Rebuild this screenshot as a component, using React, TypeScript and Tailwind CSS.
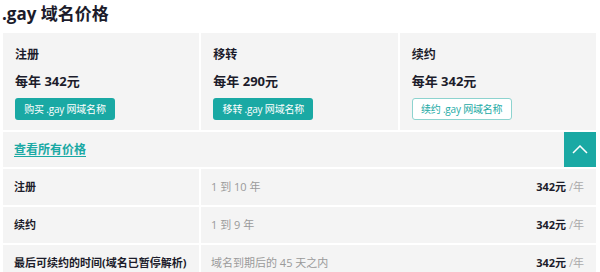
import React from 'react';

const FONT = { fontFamily: '"Open Sans", "Noto Sans CJK SC", sans-serif' };

type Plan = { label: string; price: string; action: string; outline?: boolean };

const plans: Plan[] = [
  { label: '注册', price: '每年 342元', action: '购买 .gay 网域名称' },
  { label: '移转', price: '每年 290元', action: '移转 .gay 网域名称' },
  { label: '续约', price: '每年 342元', action: '续约 .gay 网域名称', outline: true },
];

const rows = [
  { label: '注册', value: '1 到 10 年' },
  { label: '续约', value: '1 到 9 年' },
  { label: '最后可续约的时间(域名已暂停解析)', value: '域名到期后的 45 天之内' },
];

function PlanCard({ plan }: { plan: Plan }) {
  return (
    <div className="h-[97px] bg-[#f4f4f4] pl-[12px] pt-[14px]">
      <div className="text-[12px] font-bold leading-[16px] text-[#1c1c2b]">{plan.label}</div>
      <div className="mt-[9px] text-[13px] font-bold leading-[18px] text-[#1c1c2b]">{plan.price}</div>
      <button
        className={
          plan.outline
            ? 'mt-[8px] h-[22px] w-[100px] whitespace-nowrap rounded-[3px] border border-[#8dd3cf] bg-white text-[10px] tracking-[-0.2px] text-[#24aaa5]'
            : 'mt-[8px] h-[22px] w-[100px] whitespace-nowrap rounded-[3px] bg-[#1aa9a4] text-[10px] tracking-[-0.2px] text-white'
        }
      >
        {plan.action}
      </button>
    </div>
  );
}

export default function App() {
  return (
    <div className="h-[272px] w-[600px] overflow-hidden bg-white" style={FONT}>
      <h1 className="pl-[2px] pt-[1px] text-[17px] font-bold leading-[26px] text-[#1c1c2b]">.gay 域名价格</h1>

      <div className="ml-[3px] mt-[6px] flex w-[593px] flex-col gap-[2px]">
        <div className="grid grid-cols-3 gap-[2px]">
          {plans.map((p) => (
            <PlanCard key={p.label} plan={p} />
          ))}
        </div>

        <div className="flex h-[35px] items-center justify-between bg-[#f4f4f4] pl-[11px]">
          <a className="text-[12px] font-bold text-[#1aa9a4] underline underline-offset-2">查看所有价格</a>
          <div className="flex h-[35px] w-[32px] items-center justify-center bg-[#1aa9a4]">
            <svg width="16" height="9" viewBox="0 0 16 9" fill="none">
              <path d="M1 8 L8 1 L15 8" stroke="white" strokeWidth="1.5" />
            </svg>
          </div>
        </div>

        {rows.map((r) => (
          <div key={r.label} className="grid h-[36px] grid-cols-[196px_1fr] gap-[2px]">
            <div className="flex items-center bg-[#f4f4f4] pl-[11px] text-[11px] font-bold text-[#1c1c2b]">
              {r.label}
            </div>
            <div className="flex items-center justify-between bg-[#f4f4f4] pl-[10px] pr-[12px] text-[11px]">
              <span className="text-[#9a9a9a]">{r.value}</span>
              <span>
                <span className="font-bold text-[#1c1c2b]">342元</span>
                <span className="text-[#aaaaaa]"> /年</span>
              </span>
            </div>
          </div>
        ))}
      </div>
    </div>
  );
}
